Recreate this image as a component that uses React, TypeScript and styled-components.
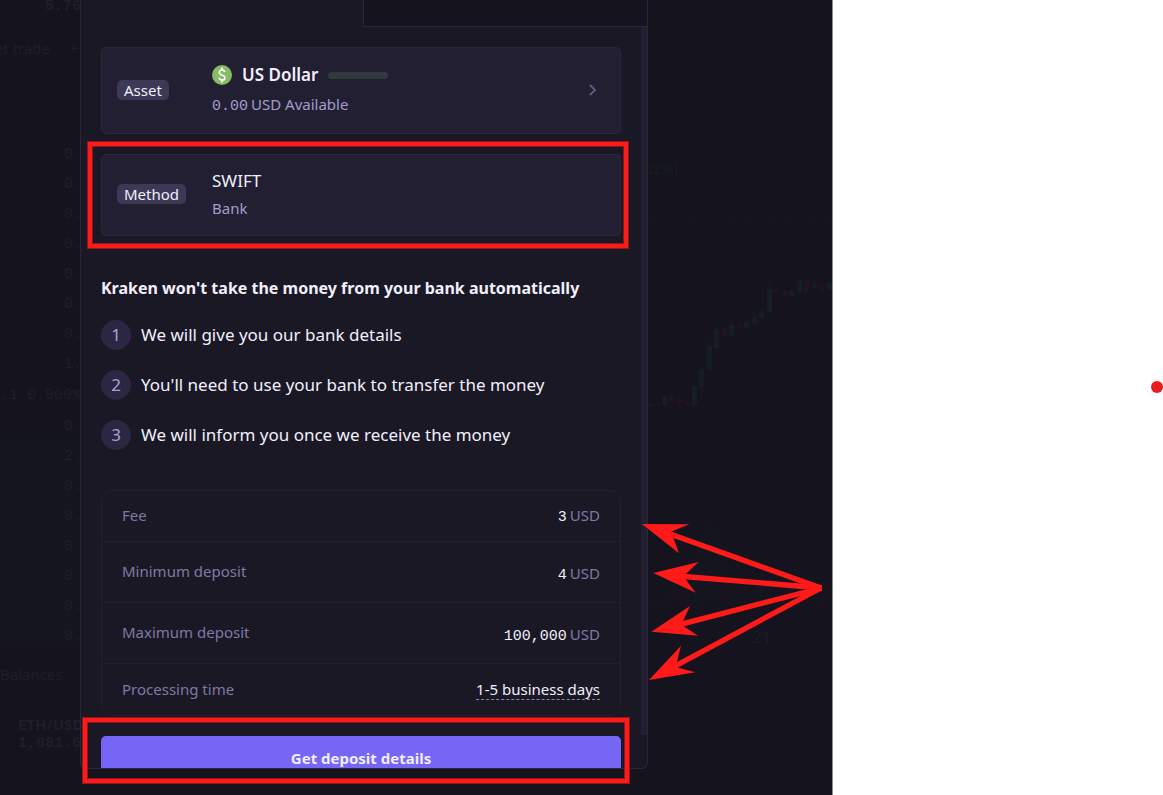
import React from "react";
import styled, { createGlobalStyle, css } from "styled-components";

const GlobalStyle = createGlobalStyle`
  *, *::before, *::after { box-sizing: border-box; }
  body {
    margin: 0;
    background: #fff;
    font-family: "Noto Sans", "Open Sans", sans-serif;
    font-size: 15px;
    line-height: 20px;
    color: #f1effb;
  }
  button { font: inherit; color: inherit; cursor: pointer; }
`;

const mono = css`
  font-family: "Liberation Mono", monospace;
`;

const Page = styled.div`
  display: grid;
  grid-template-columns: minmax(0, 833fr) minmax(0, 330fr);
  height: 100vh;
  min-height: 600px;
  overflow: hidden;
`;

const Stage = styled.main`
  position: relative;
  display: grid;
  grid-template-columns: 80px 568px minmax(0, 1fr);
  min-height: 0;
  background: #15131d;
  border-right: 1px solid #8b8a8f;
`;

const Margin = styled.aside`
  position: relative;
`;

const RecordDot = styled.span`
  position: absolute;
  top: 381px;
  right: 0;
  width: 12px;
  height: 12px;
  border-radius: 50%;
  background: #e81c1c;
`;

/* Trading screen dimmed behind the dialog */

const Ladder = styled.div`
  overflow: hidden;
  min-width: 0;
  white-space: nowrap;
  color: #201e29;
  background: linear-gradient(#15131d 0, #15131d 380px, #14151f 470px, #14151f 640px, #15131d 660px);
`;

const LadderRow = styled.div<{ $h: number; $left: number; $bold?: boolean; $mono?: boolean }>`
  display: flex;
  align-items: center;
  gap: 20px;
  height: ${(p) => p.$h}px;
  padding-left: ${(p) => p.$left}px;
  font-weight: ${(p) => (p.$bold ? 700 : 400)};
  ${(p) => p.$mono && mono}
`;

const ClipStart = styled.span`
  display: flex;
  justify-content: flex-end;
  width: 50px;
`;

const Spacer = styled.div<{ $h: number }>`
  height: ${(p) => p.$h}px;
`;

const Market = styled.div`
  min-width: 0;
  overflow: hidden;
`;

const ChangeLabel = styled.div`
  height: 221px;
  padding-top: 158px;
  border-bottom: 1px dashed #1a1822;
  color: #14201f;

  > span {
    display: flex;
    justify-content: flex-end;
    width: 30px;
  }
`;

const Candles = styled.svg`
  display: block;
  width: 184px;
  height: 400px;
`;

const AxisLabel = styled.div`
  padding: 6px 0 0 104px;
  font-size: 17px;
  color: #1d1b26;
`;

/* Dialog */

const Dialog = styled.section`
  display: flex;
  flex-direction: column;
  min-height: 0;
  margin-bottom: 26px;
  background: #1a1825;
  border: 1px solid #2b2740;
  border-top: 0;
  border-radius: 0 0 6px 6px;
  overflow: hidden;
`;

const Tabs = styled.div`
  display: flex;
  flex: none;
  height: 27px;
`;

const Tab = styled.div<{ $active?: boolean }>`
  flex: ${(p) => (p.$active ? "0 0 282px" : "1")};
  ${(p) =>
    !p.$active &&
    css`
      background: #15131d;
      border-left: 1px solid #2b2740;
      border-bottom: 1px solid #2b2740;
    `}
`;

const Scroller = styled.div`
  display: flex;
  flex: 1;
  min-height: 0;
  overflow: hidden;
`;

const Content = styled.div`
  flex: 1;
  min-width: 0;
  padding: 20px 20px 0;
`;

const ScrollTrack = styled.div`
  flex: none;
  width: 6px;
  margin-bottom: 33px;
  background: #221f33;
`;

const Card = styled.button<{ $h: number }>`
  display: flex;
  align-items: center;
  width: 100%;
  height: ${(p) => p.$h}px;
  margin: 0 0 20px;
  padding: 0 20px 2px 15px;
  border: 1px solid #2b2740;
  border-radius: 5px;
  background: #221f33;
  text-align: left;
`;

const BadgeCell = styled.span`
  display: flex;
  flex: 0 0 95px;
`;

const Badge = styled.span`
  padding: 0 7px;
  border-radius: 5px;
  background: #3d3856;
  line-height: 20px;
`;

const CardText = styled.span<{ $gap: number }>`
  flex: 1;
  display: flex;
  flex-direction: column;
  gap: ${(p) => p.$gap}px;
`;

const CardTitle = styled.span<{ $bold?: boolean }>`
  display: flex;
  align-items: center;
  gap: 10px;
  height: 20px;
  font-size: 17px;
  font-weight: ${(p) => (p.$bold ? 600 : 400)};
`;

const CardNote = styled.span`
  display: flex;
  align-items: baseline;
  gap: 3px;
  height: 20px;
  color: #a39dca;
`;

const Digits = styled.span`
  ${mono}
`;

const BalanceBar = styled.span`
  width: 60px;
  height: 7px;
  border-radius: 4px;
  background: #30393c;
`;

const Heading = styled.h2`
  margin: 42px 0 22px;
  font-size: 16px;
  line-height: 20px;
  font-weight: 700;
`;

const Steps = styled.ol`
  display: flex;
  flex-direction: column;
  gap: 20px;
  margin: 0 0 40px;
  padding: 0;
  list-style: none;
  font-size: 17px;
`;

const Step = styled.li`
  display: flex;
  align-items: center;
  gap: 10px;
`;

const StepNumber = styled.span`
  display: flex;
  align-items: center;
  justify-content: center;
  width: 30px;
  height: 30px;
  border-radius: 50%;
  background: #2b2743;
  color: #a9a3cf;
`;

const Terms = styled.table`
  width: 100%;
  margin-bottom: 20px;
  border: 1px solid #221f33;
  border-radius: 12px;
  border-spacing: 0;
`;

const TermRow = styled.tr<{ $h: number }>`
  height: ${(p) => p.$h}px;
  &:not(:last-child) > * { border-bottom: 1px solid #221f33; }
`;

const TermName = styled.th`
  padding: 0 0 2px 20px;
  text-align: left;
  font-weight: 400;
  color: #7f79a3;
`;

const TermValue = styled.td<{ $low?: boolean }>`
  padding: ${(p) => (p.$low ? "4px 20px 0 0" : "0 20px 0 0")};
`;

const Amount = styled.div`
  display: flex;
  justify-content: flex-end;
  align-items: baseline;
  gap: 3px;
`;

const Unit = styled.span`
  color: #7f79a3;
`;

const Hint = styled.span`
  border-bottom: 1px dashed #8a85ad;
`;

const Submit = styled.button`
  display: block;
  width: 100%;
  height: 46px;
  padding: 0 0 2px;
  border: 0;
  border-radius: 5px;
  background: #7765f5;
  color: #efecff;
  font-weight: 700;
`;

/* Annotations drawn over the dialog */

const Frame = styled.div<{ $top: number; $left: number; $w: number; $h: number }>`
  position: absolute;
  top: ${(p) => p.$top}px;
  left: ${(p) => p.$left}px;
  width: ${(p) => p.$w}px;
  height: ${(p) => p.$h}px;
  border: 4px solid #ff1a1a;
  box-shadow: 0 0 0 1px #8b181d, inset 0 0 0 1px #8b181d;
  pointer-events: none;
`;

const Arrows = styled.svg`
  position: absolute;
  top: 500px;
  left: 640px;
  width: 200px;
  height: 200px;
  pointer-events: none;
`;

const asks = ["0.", "0.", "0.", "0.", "0.", "0.", "0.", "1."];
const bids = ["0.", "2.", "0.", "0.", "0.", "0.", "0.", "0."];

/* x, body top, body height, wick top, wick bottom, rising */
const candles: [number, number, number, number, number, boolean][] = [
  [0, 404, 2, 402, 407, true],
  [7, 404, 1, 402, 406, true],
  [14, 397, 8, 396, 406, true],
  [21, 397, 4, 392, 403, false],
  [29, 400, 3, 395, 405, false],
  [36, 402, 3, 399, 411, false],
  [44, 386, 19, 382, 406, true],
  [51, 369, 18, 367, 392, true],
  [59, 346, 24, 337, 374, true],
  [66, 329, 19, 325, 348, true],
  [74, 329, 7, 327, 346, false],
  [81, 325, 11, 319, 341, true],
  [89, 325, 3, 317, 331, false],
  [96, 322, 6, 320, 329, true],
  [104, 317, 6, 312, 325, true],
  [111, 311, 7, 309, 320, true],
  [119, 289, 23, 278, 312, true],
  [126, 289, 3, 287, 292, false],
  [134, 291, 5, 290, 297, false],
  [141, 291, 5, 289, 297, true],
  [149, 280, 12, 279, 293, true],
  [156, 280, 12, 278, 296, false],
  [164, 285, 3, 283, 289, true],
  [171, 285, 5, 284, 291, false],
  [179, 283, 7, 280, 291, true],
];

/* traded volume under each candle */
const volumes = [4, 5, 10, 14, 12, 16, 44, 72, 82, 79, 58, 30, 28, 24, 26, 22, 41, 25, 18, 16, 24, 26, 14, 20, 22];

const steps = [
  "We will give you our bank details",
  "You'll need to use your bank to transfer the money",
  "We will inform you once we receive the money",
];

const amounts = [
  { name: "Fee", value: "3", h: 51 },
  { name: "Minimum deposit", value: "4", h: 61 },
  { name: "Maximum deposit", value: "100,000", h: 61 },
];

function OrderBook() {
  return (
    <Ladder aria-hidden="true">
      <LadderRow $h={14} $left={45} $bold $mono>5.76</LadderRow>
      <LadderRow $h={68} $left={0}>
        <ClipStart>et trade</ClipStart>
        <span>+</span>
      </LadderRow>
      <Spacer $h={58} />
      {asks.map((v, i) => (
        <LadderRow key={i} $h={30} $left={64} $mono>{v}</LadderRow>
      ))}
      <LadderRow $h={32} $left={0} $mono>.1 0.000%</LadderRow>
      {bids.map((v, i) => (
        <LadderRow key={i} $h={30} $left={64} $mono>{v}</LadderRow>
      ))}
      <LadderRow $h={44} $left={0}>Balances</LadderRow>
      <Spacer $h={18} />
      <LadderRow $h={20} $left={18} $bold>ETH/USD</LadderRow>
      <LadderRow $h={20} $left={18} $bold $mono>1,881.6</LadderRow>
    </Ladder>
  );
}

function Chart() {
  return (
    <Market aria-hidden="true">
      <ChangeLabel><span>02%)</span></ChangeLabel>
      <Candles viewBox="0 221 184 400">
        {candles.map(([x, top, h, w1, w2, up], i) => (
          <g key={x} fill={up ? "#151e24" : "#22141d"}>
            <rect x={x} y={top} width="5" height={h} />
            <rect x={x + 2} y={w1} width="1" height={w2 - w1} opacity="0.7" />
            <rect x={x} y={604 - volumes[i]} width="5" height={volumes[i]} opacity="0.3" />
          </g>
        ))}
      </Candles>
      <AxisLabel>21</AxisLabel>
    </Market>
  );
}

export default function App() {
  return (
    <Page>
      <GlobalStyle />
      <Stage>
        <OrderBook />
        <Dialog role="dialog" aria-label="Deposit">
          <Tabs>
            <Tab $active />
            <Tab />
          </Tabs>
          <Scroller>
            <Content>
              <Card type="button" $h={87}>
                <BadgeCell><Badge>Asset</Badge></BadgeCell>
                <CardText $gap={9}>
                  <CardTitle $bold>
                    <svg width="20" height="20" viewBox="0 0 20 20" fill="none">
                      <circle cx="10" cy="10" r="10" fill="#85bb65" />
                      <path
                        d="M12.800 7.200C12.500 5.700 11.400 5 10 5C8.400 5 7.300 5.900 7.300 7.400C7.300 9 8.500 9.500 10 10C11.600 10.500 12.900 11 12.900 12.700C12.900 14.200 11.600 15.100 10 15.100C8.400 15.100 7.400 14.300 7.100 12.700M10 2.500V5M10 15V17.500"
                        stroke="#fff"
                        strokeWidth="1.7"
                      />
                    </svg>
                    US Dollar
                    <BalanceBar />
                  </CardTitle>
                  <CardNote><Digits>0.00</Digits>USD Available</CardNote>
                </CardText>
                <svg width="14" height="14" viewBox="0 0 14 14" fill="none">
                  <path d="M4 2L9 7L4 12" stroke="#5f5980" strokeWidth="2" />
                </svg>
              </Card>
              <Card type="button" $h={82}>
                <BadgeCell><Badge>Method</Badge></BadgeCell>
                <CardText $gap={7}>
                  <CardTitle>SWIFT</CardTitle>
                  <CardNote>Bank</CardNote>
                </CardText>
              </Card>
              <Heading>Kraken won't take the money from your bank automatically</Heading>
              <Steps>
                {steps.map((text, i) => (
                  <Step key={text}>
                    <StepNumber>{i + 1}</StepNumber>
                    {text}
                  </Step>
                ))}
              </Steps>
              <Terms>
                <tbody>
                  {amounts.map((a) => (
                    <TermRow key={a.name} $h={a.h}>
                      <TermName scope="row">{a.name}</TermName>
                      <TermValue $low={a.h > 51}>
                        <Amount><Digits>{a.value}</Digits><Unit>USD</Unit></Amount>
                      </TermValue>
                    </TermRow>
                  ))}
                  <TermRow $h={51}>
                    <TermName scope="row">Processing time</TermName>
                    <TermValue>
                      <Amount><Hint>1-5 business days</Hint></Amount>
                    </TermValue>
                  </TermRow>
                </tbody>
              </Terms>
              <Submit type="button">Get deposit details</Submit>
            </Content>
            <ScrollTrack />
          </Scroller>
        </Dialog>
        <Chart />
        <Frame $top={142} $left={88} $w={540} $h={106} />
        <Frame $top={718} $left={83} $w={546} $h={65} />
        <Arrows viewBox="0 0 600 600" fill="#ff1a1a" stroke="#ff1a1a" aria-hidden="true">
          <g strokeWidth="16">
            <path d="M80 98L543 264" />
            <path d="M115 228L545 264" />
            <path d="M110 376L545 264" />
            <path d="M98 502L543 264" />
          </g>
          <g stroke="none">
            <path d="M6 72L148 73L93 95L117 160Z" />
            <path d="M40 219L176 186L130 229L167 278Z" />
            <path d="M34 395L150 318L124 374L174 407Z" />
            <path d="M27 540L123 437L107 501L166 517Z" />
          </g>
        </Arrows>
      </Stage>
      <Margin>
        <RecordDot />
      </Margin>
    </Page>
  );
}
